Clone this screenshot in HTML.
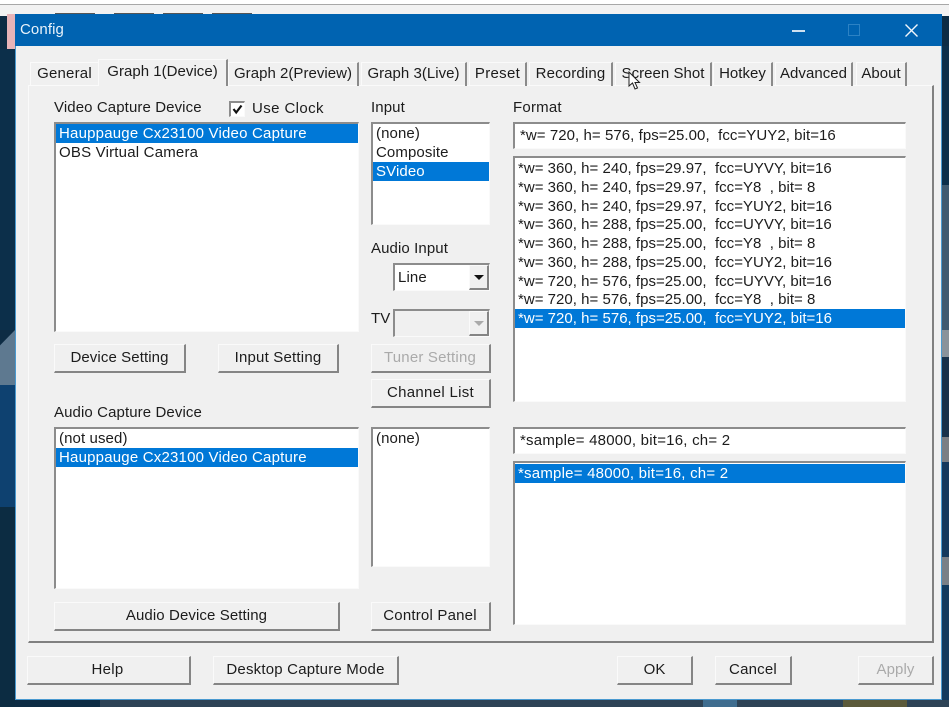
<!DOCTYPE html>
<html><head><meta charset="utf-8"><style>
html,body{margin:0;padding:0;width:949px;height:707px;overflow:hidden;background:#0d2c44}
*{box-sizing:border-box}
div,span{position:absolute;white-space:nowrap}
body{font-family:"Liberation Sans",sans-serif;font-size:15px;letter-spacing:.1px;color:#1c1c1c}
#w{left:0;top:0;width:949px;height:707px;filter:blur(.3px)}
.t{line-height:19px;height:19px}
.s{background:#fff;border-left:2px solid #8c8c8c;border-top:2px solid #8c8c8c;border-right:1px solid #fafafa;border-bottom:1px solid #fafafa}
.b{background:#f0f0f0;border-left:1px solid #fafafa;border-top:1px solid #fafafa;border-right:2px solid #858585;border-bottom:2px solid #858585;text-align:center;color:#1c1c1c}
.d{color:#aaa}
.sel{background:#0078d7;color:#fff}
.tab{top:62px;height:24px;line-height:21px;text-align:center;border-right:2px solid #8a8a8a;border-top:1px solid #fafafa;border-left:1px solid #fafafa;letter-spacing:.03px}
.row{left:0;right:0;height:19px;line-height:19px}
.f{letter-spacing:.02px}
.h{letter-spacing:.2px}
.m{letter-spacing:.22px}
</style></head><body><div id="w">
<div style="left:0;top:0;width:949px;height:4px;background:#fff"></div>
<div style="left:0;top:4px;width:949px;height:1px;background:#a8a8a8"></div>
<div style="left:0;top:5px;width:949px;height:11px;background:#f2f2f2"></div>
<div style="left:7px;top:14px;width:9px;height:35px;background:#e8b4b8"></div>
<div style="left:55px;top:13px;width:40px;height:1px;background:#555"></div>
<div style="left:114px;top:13px;width:40px;height:1px;background:#555"></div>
<div style="left:163px;top:13px;width:40px;height:1px;background:#555"></div>
<div style="left:212px;top:13px;width:40px;height:1px;background:#555"></div>
<div style="left:0;top:49px;width:15px;height:281px;background:#0c2f4a"></div>
<div style="left:0;top:330px;width:15px;height:55px;background:#5e7990;clip-path:polygon(0 28%,100% 0,100% 100%,0 100%)"></div>
<div style="left:0;top:385px;width:15px;height:122px;background:#0e4170"></div>
<div style="left:0;top:507px;width:15px;height:200px;background:#0c2c42"></div>
<div style="left:942px;top:46px;width:7px;height:139px;background:#0c2f4a"></div>
<div style="left:942px;top:185px;width:7px;height:145px;background:#3f5a70"></div>
<div style="left:942px;top:330px;width:7px;height:27px;background:#8a939b"></div>
<div style="left:942px;top:357px;width:7px;height:80px;background:#18314a"></div>
<div style="left:942px;top:437px;width:7px;height:25px;background:#7b7f84"></div>
<div style="left:942px;top:462px;width:7px;height:95px;background:#14385c"></div>
<div style="left:942px;top:557px;width:7px;height:28px;background:#7a8087"></div>
<div style="left:942px;top:585px;width:7px;height:122px;background:#123a5e"></div>
<div style="left:100px;top:700px;width:849px;height:7px;background:#2e4356"></div>
<div style="left:703px;top:700px;width:34px;height:7px;background:#3f6d8f"></div>
<div style="left:843px;top:700px;width:64px;height:7px;background:#5c5a3a"></div>

<div style="left:15px;top:14px;width:927px;height:686px;background:#f0f0f0;border:1px solid #4a9ad0;border-top:0"></div>
<div style="left:15px;top:14px;width:927px;height:32px;background:#0063b1"></div>
<div class="t" style="left:20px;top:20px;color:#e8f2fa">Config</div>
<div style="left:792px;top:30px;width:13px;height:2px;background:#cfe1f0"></div>
<div style="left:848px;top:24px;width:12px;height:12px;border:1px solid #2c82c4"></div>
<svg style="position:absolute;left:905px;top:24px" width="13" height="13" viewBox="0 0 13 13"><path d="M0.5 0.5L12.5 12.5M12.5 0.5L0.5 12.5" stroke="#f2f7fb" stroke-width="1.4" fill="none"/></svg>

<!-- tab panel -->
<div style="left:28px;top:85px;width:906px;height:558px;border-top:1px solid #fafafa;border-left:1px solid #fafafa;border-right:2px solid #808080;border-bottom:2px solid #808080"></div>

<div class="tab" style="left:30px;width:68px;border-right:0;letter-spacing:.2px">General</div>
<div class="tab" style="left:98px;top:59px;width:130px;height:27px;line-height:24px;background:#f0f0f0;z-index:2">Graph 1(Device)</div>
<div class="tab" style="left:228px;width:131px">Graph 2(Preview)</div>
<div class="tab" style="left:361px;width:106px">Graph 3(Live)</div>
<div class="tab" style="left:469px;width:58px;letter-spacing:.3px">Preset</div>
<div class="tab" style="left:529px;width:84px;letter-spacing:.15px">Recording</div>
<div class="tab" style="left:615px;width:97px">Screen Shot</div>
<div class="tab" style="left:713px;width:60px">Hotkey</div>
<div class="tab" style="left:775px;width:78px">Advanced</div>
<div class="tab" style="left:856px;width:51px">About</div>
<svg style="position:absolute;left:628px;top:71px;z-index:5" width="15" height="20" viewBox="0 0 15 20"><path d="M1 1V15L4.500 12L7 18L9.500 17L7 11.500H11.500Z" fill="#fff" stroke="#222" stroke-width="1"/></svg>

<div class="t" style="left:54px;top:98px">Video Capture Device</div>
<div class="s" style="left:229px;top:101px;width:16px;height:16px"></div>
<svg style="position:absolute;left:232px;top:104px" width="11" height="11" viewBox="0 0 11 11"><path d="M1.500 5L4.200 8.500L9.500 1.500" stroke="#111" stroke-width="2.200" fill="none"/></svg>
<div class="t" style="left:252px;top:99px;letter-spacing:.4px">Use Clock</div>
<div class="t" style="left:371px;top:98px">Input</div>
<div class="t m" style="left:513px;top:98px">Format</div>

<div class="s" style="left:54px;top:122px;width:305px;height:210px">
<div class="row sel h" style="top:0;padding-left:3px">Hauppauge Cx23100 Video Capture</div>
<div class="row h" style="top:19px;padding-left:3px">OBS Virtual Camera</div>
</div>
<div class="s" style="left:371px;top:122px;width:119px;height:103px">
<div class="row" style="top:0;padding-left:3px">(none)</div>
<div class="row" style="top:19px;padding-left:3px">Composite</div>
<div class="row sel" style="top:38px;padding-left:3px">SVideo</div>
</div>
<div class="s" style="left:513px;top:122px;width:393px;height:27px;line-height:24px;padding-left:5px;letter-spacing:.06px">*w= 720, h= 576, fps=25.00,&nbsp; fcc=YUY2, bit=16</div>
<div class="s f" style="left:513px;top:156px;width:393px;height:246px">
<div class="row" style="top:1px;padding-left:3px">*w= 360, h= 240, fps=29.97,&nbsp; fcc=UYVY, bit=16</div>
<div class="row" style="top:20px;padding-left:3px">*w= 360, h= 240, fps=29.97,&nbsp; fcc=Y8&nbsp; , bit= 8</div>
<div class="row" style="top:39px;padding-left:3px">*w= 360, h= 240, fps=29.97,&nbsp; fcc=YUY2, bit=16</div>
<div class="row" style="top:57px;padding-left:3px">*w= 360, h= 288, fps=25.00,&nbsp; fcc=UYVY, bit=16</div>
<div class="row" style="top:76px;padding-left:3px">*w= 360, h= 288, fps=25.00,&nbsp; fcc=Y8&nbsp; , bit= 8</div>
<div class="row" style="top:95px;padding-left:3px">*w= 360, h= 288, fps=25.00,&nbsp; fcc=YUY2, bit=16</div>
<div class="row" style="top:114px;padding-left:3px">*w= 720, h= 576, fps=25.00,&nbsp; fcc=UYVY, bit=16</div>
<div class="row" style="top:132px;padding-left:3px">*w= 720, h= 576, fps=25.00,&nbsp; fcc=Y8&nbsp; , bit= 8</div>
<div class="row sel" style="top:151px;padding-left:3px">*w= 720, h= 576, fps=25.00,&nbsp; fcc=YUY2, bit=16</div>
</div>

<div class="t" style="left:371px;top:239px">Audio Input</div>
<div class="s" style="left:393px;top:263px;width:97px;height:28px;line-height:25px;padding-left:3px">Line
<div class="b" style="right:0;top:0;width:20px;height:25px"></div>
<div style="right:5px;top:10px;width:0;height:0;border-left:5px solid transparent;border-right:5px solid transparent;border-top:5px solid #111"></div>
</div>
<div class="t" style="left:371px;top:309px">TV</div>
<div class="s" style="left:393px;top:309px;width:97px;height:28px;background:#f0f0f0">
<div class="b" style="right:0;top:0;width:20px;height:25px"></div>
<div style="right:5px;top:10px;width:0;height:0;border-left:5px solid transparent;border-right:5px solid transparent;border-top:5px solid #aaa"></div>
</div>

<div class="b" style="left:54px;top:344px;width:132px;height:29px;line-height:25px">Device Setting</div>
<div class="b h" style="left:218px;top:344px;width:121px;height:29px;line-height:25px">Input Setting</div>
<div class="b d h" style="left:371px;top:344px;width:120px;height:29px;line-height:25px;padding-right:1px">Tuner Setting</div>
<div class="b" style="left:371px;top:379px;width:120px;height:29px;line-height:25px;letter-spacing:.3px">Channel List</div>

<div class="t" style="left:54px;top:403px">Audio Capture Device</div>
<div class="s" style="left:54px;top:427px;width:305px;height:162px">
<div class="row" style="top:0;padding-left:3px">(not used)</div>
<div class="row sel h" style="top:19px;padding-left:3px">Hauppauge Cx23100 Video Capture</div>
</div>
<div class="s" style="left:371px;top:427px;width:119px;height:140px">
<div class="row" style="top:0;padding-left:3px">(none)</div>
</div>
<div class="s m" style="left:513px;top:427px;width:393px;height:27px;line-height:24px;padding-left:5px">*sample= 48000, bit=16, ch= 2</div>
<div class="s m" style="left:513px;top:461px;width:393px;height:164px">
<div class="row sel" style="top:1px;padding-left:3px">*sample= 48000, bit=16, ch= 2</div>
</div>

<div class="b" style="left:54px;top:602px;width:286px;height:29px;line-height:25px">Audio Device Setting</div>
<div class="b h" style="left:371px;top:602px;width:120px;height:29px;line-height:25px;padding-right:1px">Control Panel</div>

<div class="b" style="left:27px;top:656px;width:164px;height:29px;line-height:25px;letter-spacing:.3px;padding-right:2px">Help</div>
<div class="b h" style="left:213px;top:656px;width:186px;height:29px;line-height:25px">Desktop Capture Mode</div>
<div class="b" style="left:617px;top:656px;width:76px;height:29px;line-height:25px">OK</div>
<div class="b h" style="left:715px;top:656px;width:77px;height:29px;line-height:25px">Cancel</div>
<div class="b d" style="left:858px;top:656px;width:76px;height:29px;line-height:25px">Apply</div>
</div></body></html>
